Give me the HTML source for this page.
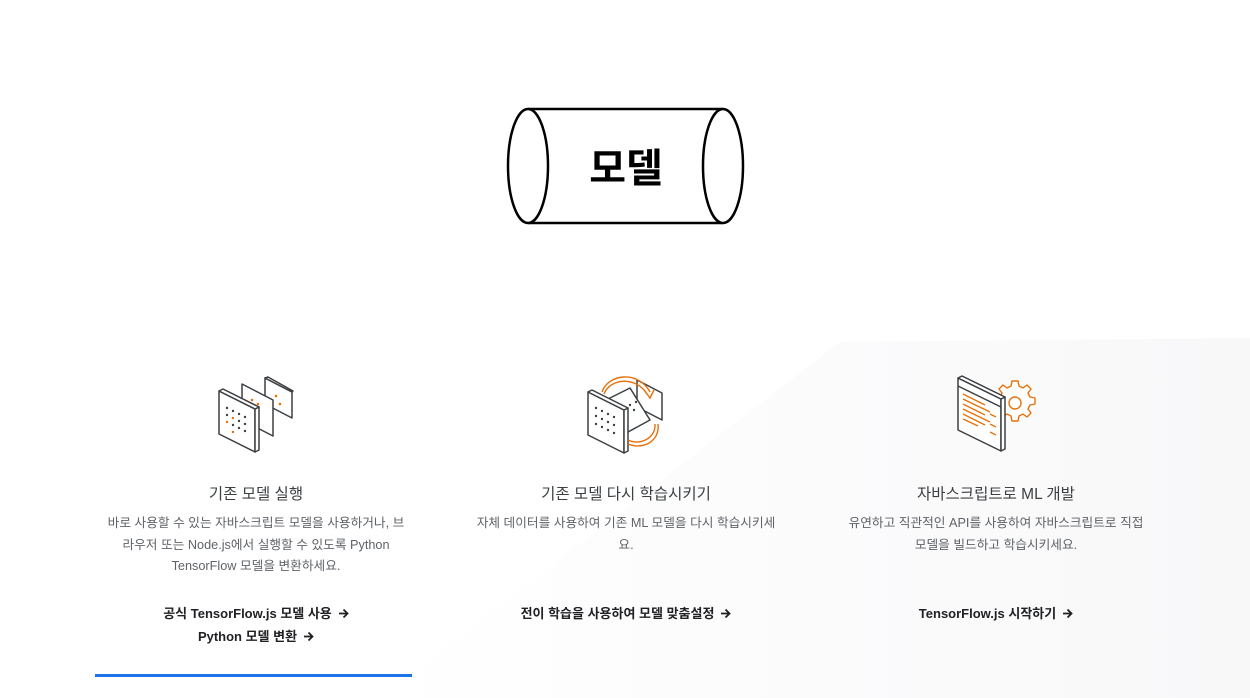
<!DOCTYPE html>
<html><head><meta charset="utf-8"><style>
body{margin:0;width:1250px;height:698px;background:#fff;position:relative;overflow:hidden;font-family:"Liberation Sans","Noto Sans CJK KR",sans-serif}
.col{position:absolute;top:0;width:320px;text-align:center}
.t{position:absolute;top:482px;left:0;width:100%;font-size:15.5px;color:#3c4043}
.d{position:absolute;top:513px;left:0;width:100%;font-size:12.7px;line-height:21.5px;color:#5f6368;white-space:nowrap}
.l{position:absolute;left:0;width:100%;font-size:13px;font-weight:bold;color:#202124}
.a{display:inline-block;vertical-align:-1px;margin-left:6px}
</style></head><body>
<svg width="1250" height="698" style="position:absolute;left:0;top:0">
<defs><linearGradient id="g" x1="0" y1="0" x2="1" y2="0"><stop offset="0" stop-color="#fff"/><stop offset="0.5" stop-color="#fbfbfc"/><stop offset="1" stop-color="#f8f8f9"/></linearGradient></defs>
<polygon points="380,698 840,342 1250,338 1250,698" fill="url(#g)"/>
<g fill="#fff" stroke="#000" stroke-width="2.5">
<line x1="528" y1="109" x2="723" y2="109"/><line x1="528" y1="223" x2="723" y2="223"/>
<ellipse cx="528" cy="166" rx="20" ry="57"/><ellipse cx="723" cy="166" rx="20" ry="57"/>
</g>
<text x="626" y="182" text-anchor="middle" font-size="40" font-weight="bold" font-family="Liberation Sans,Noto Sans CJK KR,sans-serif" fill="#000">모델</text>
<g stroke="#3c4043" stroke-width="1.5" fill="#fff" stroke-linejoin="round">
<polygon points="265,378 292,392 292,418 265,404"/><polygon points="265,378 268,377 293,391 292,392"/>
<polygon points="242,384 273,400 273,436 242,420"/>
<polygon points="219,391 255,409 255,452 219,434"/><polygon points="255,409 259,407 259,450 255,452"/><polygon points="219,391 223,389 259,407 255,409"/>
</g>
<g fill="#3c4043"><circle cx="227" cy="408" r="1.2"/><circle cx="233" cy="411" r="1.2"/><circle cx="239" cy="414" r="1.2"/><circle cx="245" cy="417" r="1.2"/><circle cx="227" cy="415" r="1.2"/><circle cx="239" cy="421" r="1.2"/><circle cx="245" cy="424" r="1.2"/><circle cx="233" cy="425" r="1.2"/><circle cx="245" cy="431" r="1.2"/><circle cx="239" cy="428" r="1.2"/></g>
<g fill="#e8710a"><circle cx="233" cy="418" r="1.2"/><circle cx="227" cy="422" r="1.2"/><circle cx="233" cy="432" r="1.2"/><circle cx="252" cy="400" r="1.3"/><circle cx="258" cy="404" r="1.3"/><circle cx="276" cy="396" r="1.3"/><circle cx="280" cy="404" r="1.3"/></g>
<g stroke="#3c4043" stroke-width="1.5" fill="#fff" stroke-linejoin="round">
<polygon points="637,380 662,393 662,420 637,407"/>
<polygon points="608,399 630,388 650,420 628,432"/>
<polygon points="588,392 624,410 624,453 588,435"/><polygon points="624,410 628,408 628,451 624,453"/><polygon points="588,392 592,390 628,408 624,410"/>
</g>
<g fill="none" stroke="#e8710a" stroke-width="1.4"><path d="M602,392 C608,374 638,370 650,392"/><path d="M604,394 C610,378 636,376 647,394"/><path d="M644,390 l6,8 l4,-8"/><path d="M628,440 C640,446 656,438 655,424"/><path d="M628,444 C642,450 660,442 658,424"/></g>
<g fill="#3c4043"><circle cx="596" cy="408" r="1.2"/><circle cx="602" cy="411" r="1.2"/><circle cx="608" cy="414" r="1.2"/><circle cx="614" cy="417" r="1.2"/><circle cx="596" cy="416" r="1.2"/><circle cx="602" cy="419" r="1.2"/><circle cx="608" cy="422" r="1.2"/><circle cx="614" cy="425" r="1.2"/><circle cx="596" cy="424" r="1.2"/><circle cx="602" cy="427" r="1.2"/><circle cx="608" cy="430" r="1.2"/><circle cx="614" cy="433" r="1.2"/><circle cx="630" cy="405" r="1.2"/><circle cx="636" cy="402" r="1.2"/><circle cx="634" cy="410" r="1.2"/></g>
<g fill="#fff" stroke="#e8710a" stroke-width="1.4" stroke-linejoin="round">
<path d="M1012,381 h6 l1,5 l4,2 l4,-3 l4,4 l-3,4 l2,4 l5,1 v6 l-5,1 l-2,4 l3,4 l-4,4 l-4,-3 l-4,2 l-1,5 h-6 l-1,-5 l-4,-2 l-4,3 l-4,-4 l3,-4 l-2,-4 l-5,-1 v-6 l5,-1 l2,-4 l-3,-4 l4,-4 l4,3 l4,-2 z"/>
<circle cx="1015" cy="403" r="6"/></g>
<g stroke="#3c4043" stroke-width="1.5" fill="#fff" stroke-linejoin="round">
<polygon points="958,378 1001,399 1001,451 958,430"/><polygon points="1001,399 1005,397 1005,449 1001,451"/><polygon points="958,378 962,376 1005,397 1001,399"/><line x1="958" y1="386" x2="1001" y2="407"/>
</g>
<g stroke="#e8710a" stroke-width="1.3"><line x1="963" y1="394" x2="985" y2="405"/><line x1="963" y1="399" x2="990" y2="412"/><line x1="963" y1="404" x2="985" y2="415"/><line x1="963" y1="409" x2="990" y2="422"/><line x1="963" y1="414" x2="985" y2="425"/><line x1="963" y1="419" x2="978" y2="426"/></g>
<g stroke="#e8710a" stroke-width="1.3"><line x1="990" y1="414" x2="996" y2="417"/><line x1="990" y1="424" x2="996" y2="427"/><line x1="990" y1="432" x2="996" y2="435"/></g>
<rect x="95" y="674" width="317" height="3" fill="#1a73e8"/>
</svg>
<div class="col" style="left:96px">
<div class="t">기존 모델 실행</div>
<div class="d">바로 사용할 수 있는 자바스크립트 모델을 사용하거나, 브<br>라우저 또는 Node.js에서 실행할 수 있도록 Python<br>TensorFlow 모델을 변환하세요.</div>
<div class="l" style="top:603px">공식 TensorFlow.js 모델 사용<svg class="a" width="11" height="11" viewBox="0 0 11 11"><path d="M1,5.5h8M5.5,1.5l4,4-4,4" fill="none" stroke="#202124" stroke-width="1.8"/></svg></div>
<div class="l" style="top:626px">Python 모델 변환<svg class="a" width="11" height="11" viewBox="0 0 11 11"><path d="M1,5.5h8M5.5,1.5l4,4-4,4" fill="none" stroke="#202124" stroke-width="1.8"/></svg></div>
</div>
<div class="col" style="left:466px">
<div class="t">기존 모델 다시 학습시키기</div>
<div class="d">자체 데이터를 사용하여 기존 ML 모델을 다시 학습시키세<br>요.</div>
<div class="l" style="top:603px">전이 학습을 사용하여 모델 맞춤설정<svg class="a" width="11" height="11" viewBox="0 0 11 11"><path d="M1,5.5h8M5.5,1.5l4,4-4,4" fill="none" stroke="#202124" stroke-width="1.8"/></svg></div>
</div>
<div class="col" style="left:836px">
<div class="t">자바스크립트로 ML 개발</div>
<div class="d">유연하고 직관적인 API를 사용하여 자바스크립트로 직접<br>모델을 빌드하고 학습시키세요.</div>
<div class="l" style="top:603px">TensorFlow.js 시작하기<svg class="a" width="11" height="11" viewBox="0 0 11 11"><path d="M1,5.5h8M5.5,1.5l4,4-4,4" fill="none" stroke="#202124" stroke-width="1.8"/></svg></div>
</div>
</body></html>
